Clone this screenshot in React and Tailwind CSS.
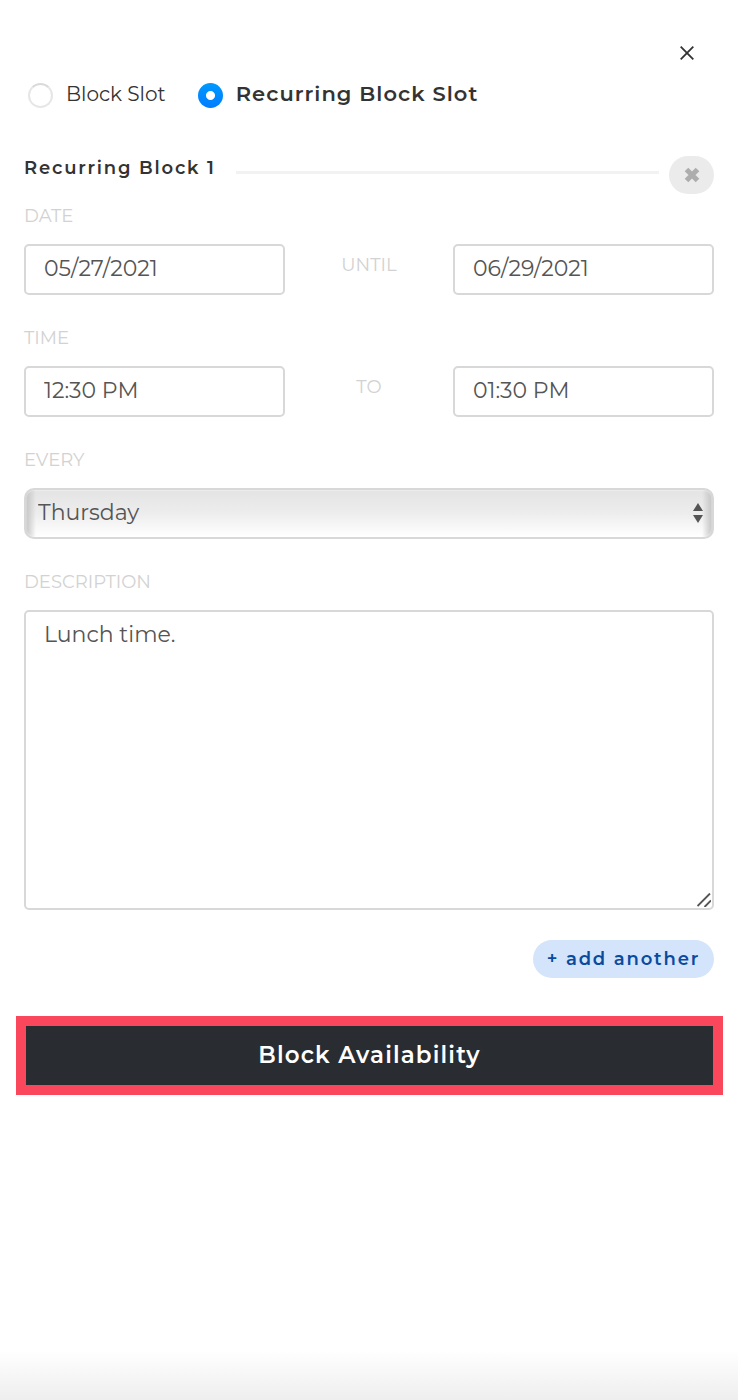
import { useState } from 'react'

const days = ['Monday', 'Tuesday', 'Wednesday', 'Thursday', 'Friday', 'Saturday', 'Sunday']

const labelClass = 'block text-[18px] leading-6 text-[#d2d2d2]'
const inputClass =
  'block w-full min-w-0 rounded-[5px] border-2 border-[#d8d8d8] bg-white px-[18px] pt-[9px] pb-2.5 text-[22px] leading-7 text-[#555] outline-none'

function SlotOption({ label, value, selected, onChange }) {
  const checked = value === selected
  return (
    <label className={`flex items-center gap-[13px] leading-6 text-[#333] ${checked ? 'text-[21px] font-semibold tracking-wider' : 'text-[20px]'}`}>
      <input
        type="radio"
        name="slot"
        value={value}
        checked={checked}
        onChange={() => onChange(value)}
        className="size-[25px] shrink-0 appearance-none rounded-full border-2 border-[#e6e6e6] border-t-[#dadada] bg-white checked:border-0 checked:bg-[radial-gradient(circle,#fff_4px,transparent_5px),linear-gradient(#0098ff,#007dff)]"
      />
      <span className="pb-0.5">{label}</span>
    </label>
  )
}

function RangeRow({ id, label, joiner, from, to }) {
  return (
    <div>
      <label htmlFor={`${id}-from`} className={labelClass}>{label}</label>
      <div className="mt-4 grid grid-cols-[14fr_9fr_14fr]">
        <input id={`${id}-from`} type="text" defaultValue={from} className={inputClass} />
        <label htmlFor={`${id}-to`} className={`${labelClass} pt-[9px] text-center`}>{joiner}</label>
        <input id={`${id}-to`} type="text" defaultValue={to} className={inputClass} />
      </div>
    </div>
  )
}

export default function App() {
  const [slot, setSlot] = useState('recurring')

  return (
    <div className="flex min-h-screen flex-col bg-white font-['Montserrat','Inter',sans-serif]">
      <header className="flex justify-end px-[38px] pt-10">
        <button type="button" aria-label="Close" className="flex size-[26px] items-center justify-center text-[#333]">
          <svg viewBox="0 0 14 14" className="size-3.5" fill="none" stroke="currentColor" strokeWidth="1.8">
            <path d="M.7.7l12.6 12.6M13.3.7L.7 13.3" />
          </svg>
        </button>
      </header>

      <form className="pr-[15px] pl-4" onSubmit={(e) => e.preventDefault()}>
        <div className="pr-[9px] pl-2">
          <div className="flex gap-8 px-1 pt-4">
            <SlotOption label="Block Slot" value="single" selected={slot} onChange={setSlot} />
            <SlotOption label="Recurring Block Slot" value="recurring" selected={slot} onChange={setSlot} />
          </div>

          <div className="mt-12 flex items-center">
            <h2 className="pb-3.5 text-[18px] leading-6 font-semibold tracking-widest text-[#333]">Recurring Block 1</h2>
            <hr className="mr-2.5 mb-1.5 ml-5 h-[3px] flex-1 border-0 bg-[#f2f2f2]" />
            <button
              type="button"
              aria-label="Remove recurring block"
              className="flex h-[38px] w-[45px] items-center justify-center rounded-[19px] bg-[#ebebeb] text-[#adadad]"
            >
              <svg viewBox="0 0 16 16" className="size-4" fill="none" stroke="currentColor" strokeWidth="5">
                <path d="M2.500 2.500l11 11M13.500 2.500l-11 11" />
              </svg>
            </button>
          </div>

          <div className="mt-2.5 flex flex-col gap-[31px]">
            <RangeRow id="date" label="DATE" joiner="UNTIL" from="05/27/2021" to="06/29/2021" />
            <RangeRow id="time" label="TIME" joiner="TO" from="12:30 PM" to="01:30 PM" />

            <div>
              <label htmlFor="every" className={labelClass}>EVERY</label>
              <div className="relative mt-4">
                <select
                  id="every"
                  defaultValue="Thursday"
                  className="block w-full appearance-none rounded-[10px] border-2 border-[#d8d8d8] bg-[linear-gradient(to_right,#c4c4c4,transparent_10px,transparent_calc(100%-10px),#c4c4c4),linear-gradient(#e4e4e4,#ededed_50%,#fff)] pt-[9px] pr-10 pb-2.5 pl-3 text-[22px] leading-7 text-[#555] shadow-[inset_0_0_2px_#fff] outline-none"
                >
                  {days.map((day) => (
                    <option key={day}>{day}</option>
                  ))}
                </select>
                <svg
                  viewBox="0 0 10 20"
                  className="pointer-events-none absolute top-[15px] right-[11px] h-5 w-2.5 fill-[#555]"
                >
                  <path d="M5 0l5 8H0zM5 20l5-8H0z" />
                </svg>
              </div>
            </div>

            <div>
              <label htmlFor="description" className={labelClass}>DESCRIPTION</label>
              <div className="relative mt-4">
                <textarea
                  id="description"
                  defaultValue="Lunch time."
                  className={`${inputClass} h-[300px] resize-none`}
                />
                <svg
                  viewBox="0 0 14 14"
                  className="pointer-events-none absolute right-[3px] bottom-[3px] size-3.5"
                  fill="none"
                  stroke="#555"
                  strokeWidth="1.9"
                >
                  <path d="M.5 13L13 .5M7.500 14L14 7.500" />
                </svg>
              </div>
            </div>
          </div>

          <div className="mt-[30px] flex justify-end">
            <button
              type="button"
              className="rounded-full bg-[#d4e4fb] px-3.5 py-[7px] text-[18px] leading-6 font-semibold tracking-widest text-[#0a4ba0]"
            >
              + add another
            </button>
          </div>
        </div>

        <button
          type="submit"
          className="mt-[38px] block w-full border-10 border-[#fa475c] bg-[#292c31] pt-[15px] pb-4 text-[23px] leading-7 font-semibold tracking-wider text-white"
        >
          Block Availability
        </button>
      </form>

      <div className="mt-auto h-[50px] bg-linear-to-b from-white to-[#eee]" />
    </div>
  )
}
